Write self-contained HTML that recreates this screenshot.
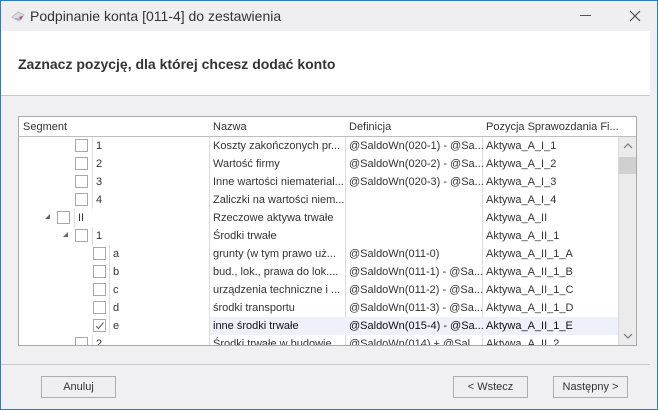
<!DOCTYPE html>
<html><head><meta charset="utf-8"><style>
*{margin:0;padding:0;box-sizing:border-box}
body{width:658px;height:410px;overflow:hidden;background:#f0eff2;font-family:"Liberation Sans",sans-serif;font-size:11px;color:#222;position:relative}
.win{position:absolute;left:0;top:0;width:658px;height:410px;border:1px solid #2a7bc4;border-top:1px solid #2a7bc4}
.title{position:absolute;left:1px;top:1px;width:656px;height:30px;background:#efeef1}
.title span{position:absolute;left:29px;top:7px;font-size:14px;color:#333}
.hdr{position:absolute;left:1px;top:31px;width:649px;height:65px;background:#fff;border-bottom:1px solid #c8c8c8}
.hdr b{position:absolute;left:17px;top:25px;font-size:14px;color:#333}
.grid{position:absolute;left:18px;top:116px;width:619px;height:230px;background:#fff;border:1px solid #a9a9a9;overflow:hidden}
.gh{position:absolute;top:0;height:20px;border-bottom:1px solid #bdbdbd;border-right:1px solid #bdbdbd;padding:4px 0 0 4px;color:#333;background:#fff;white-space:nowrap}
.vl{position:absolute;top:20px;bottom:0;width:1px;background:#dcdcdc}
.r{position:absolute;height:18px;line-height:18px;white-space:nowrap;color:#333}
.cb{position:absolute;width:13px;height:13px;border:1px solid #a8a8a8;background:#fff}
.tl{position:absolute;width:1px;height:18px;background:#ddd}
.ar{position:absolute;width:0;height:0;border-left:5px solid transparent;border-bottom:5px solid #666}
.sb{position:absolute;left:599px;top:20px;width:18px;height:208px;background:#ebebeb;border-left:1px solid #d8d8d8}
.btn{position:absolute;top:376px;height:22px;border:1px solid #adadad;background:#efeef1;text-align:center;line-height:20px;color:#333;font-size:11px}
</style></head><body>
<div class="win"></div>
<div class="title">
<svg style="position:absolute;left:9px;top:8px" width="16" height="14"><path d="M2 8 L8 3 L14 6 L9 12 Z" fill="#ddd" stroke="#bbb"/><path d="M9 8 L13 7 L11 11 Z" fill="#b04a9a"/><path d="M5 10 L10 10" stroke="#7a8fd0"/></svg>
<span>Podpinanie konta [011-4] do zestawienia</span>
<svg style="position:absolute;left:579px;top:14px" width="12" height="2"><rect width="11" height="1" fill="#555"/></svg>
<svg style="position:absolute;left:628px;top:9px" width="12" height="12"><path d="M1 1 L11 11 M11 1 L1 11" stroke="#444" stroke-width="1.1"/></svg>
</div>
<div class="hdr"><b>Zaznacz pozycję, dla której chcesz dodać konto</b></div>
<div class="grid">
<div class="gh" style="left:0;width:191px">Segment</div>
<div class="gh" style="left:190px;width:137px">Nazwa</div>
<div class="gh" style="left:326px;width:138px">Definicja</div>
<div class="gh" style="left:463px;width:137px">Pozycja Sprawozdania Fi...</div>
<div class="gh" style="left:599px;width:20px;border-right:none"></div>
<div class="vl" style="left:190px"></div><div class="vl" style="left:326px"></div><div class="vl" style="left:463px"></div>
<div style="position:absolute;left:191px;top:200px;width:408px;height:18px;background:#eef0fb"></div>

<!-- rows: top = 20 + 18*i -->
<div class="cb" style="left:56px;top:22px"></div><div class="tl" style="left:73px;top:20px"></div><div class="r" style="left:77px;top:20px">1</div>
<div class="cb" style="left:56px;top:40px"></div><div class="tl" style="left:73px;top:38px"></div><div class="r" style="left:77px;top:38px">2</div>
<div class="cb" style="left:56px;top:58px"></div><div class="tl" style="left:73px;top:56px"></div><div class="r" style="left:77px;top:56px">3</div>
<div class="cb" style="left:56px;top:76px"></div><div class="tl" style="left:73px;top:74px"></div><div class="r" style="left:77px;top:74px">4</div>
<div class="ar" style="left:26px;top:97px"></div><div class="cb" style="left:38px;top:94px"></div><div class="tl" style="left:55px;top:92px"></div><div class="r" style="left:59px;top:92px">II</div>
<div class="ar" style="left:44px;top:115px"></div><div class="cb" style="left:56px;top:112px"></div><div class="tl" style="left:73px;top:110px"></div><div class="r" style="left:77px;top:110px">1</div>
<div class="cb" style="left:74px;top:130px"></div><div class="tl" style="left:90px;top:128px"></div><div class="r" style="left:94px;top:128px">a</div>
<div class="cb" style="left:74px;top:148px"></div><div class="tl" style="left:90px;top:146px"></div><div class="r" style="left:94px;top:146px">b</div>
<div class="cb" style="left:74px;top:166px"></div><div class="tl" style="left:90px;top:164px"></div><div class="r" style="left:94px;top:164px">c</div>
<div class="cb" style="left:74px;top:184px"></div><div class="tl" style="left:90px;top:182px"></div><div class="r" style="left:94px;top:182px">d</div>
<div class="cb" style="left:74px;top:202px"><svg width="11" height="11" style="position:absolute;left:0;top:0"><path d="M2 6 L4.5 8.5 L9.5 2.5" stroke="#666" fill="none" stroke-width="1.1"/></svg></div><div class="tl" style="left:90px;top:200px"></div><div class="r" style="left:94px;top:200px">e</div>
<div class="cb" style="left:56px;top:220px"></div><div class="tl" style="left:73px;top:218px"></div><div class="r" style="left:77px;top:218px">2</div>

<div class="r" style="left:194px;top:20px">Koszty zakończonych pr...</div>
<div class="r" style="left:194px;top:38px">Wartość firmy</div>
<div class="r" style="left:194px;top:56px">Inne wartości niematerial...</div>
<div class="r" style="left:194px;top:74px">Zaliczki na wartości niem...</div>
<div class="r" style="left:194px;top:92px">Rzeczowe aktywa trwałe</div>
<div class="r" style="left:194px;top:110px">Środki trwałe</div>
<div class="r" style="left:194px;top:128px">grunty (w tym prawo uż...</div>
<div class="r" style="left:194px;top:146px">bud., lok., prawa do lok....</div>
<div class="r" style="left:194px;top:164px">urządzenia techniczne i ...</div>
<div class="r" style="left:194px;top:182px">środki transportu</div>
<div class="r" style="left:194px;top:200px;color:#111">inne środki trwałe</div>
<div class="r" style="left:194px;top:218px">Środki trwałe w budowie</div>

<div class="r" style="left:330px;top:20px">@SaldoWn(020-1) - @Sa...</div>
<div class="r" style="left:330px;top:38px">@SaldoWn(020-2) - @Sa...</div>
<div class="r" style="left:330px;top:56px">@SaldoWn(020-3) - @Sa...</div>
<div class="r" style="left:330px;top:128px">@SaldoWn(011-0)</div>
<div class="r" style="left:330px;top:146px">@SaldoWn(011-1) - @Sa...</div>
<div class="r" style="left:330px;top:164px">@SaldoWn(011-2) - @Sa...</div>
<div class="r" style="left:330px;top:182px">@SaldoWn(011-3) - @Sa...</div>
<div class="r" style="left:330px;top:200px;color:#111">@SaldoWn(015-4) - @Sa...</div>
<div class="r" style="left:330px;top:218px">@SaldoWn(014) + @Sal...</div>

<div class="r" style="left:467px;top:20px">Aktywa_A_I_1</div>
<div class="r" style="left:467px;top:38px">Aktywa_A_I_2</div>
<div class="r" style="left:467px;top:56px">Aktywa_A_I_3</div>
<div class="r" style="left:467px;top:74px">Aktywa_A_I_4</div>
<div class="r" style="left:467px;top:92px">Aktywa_A_II</div>
<div class="r" style="left:467px;top:110px">Aktywa_A_II_1</div>
<div class="r" style="left:467px;top:128px">Aktywa_A_II_1_A</div>
<div class="r" style="left:467px;top:146px">Aktywa_A_II_1_B</div>
<div class="r" style="left:467px;top:164px">Aktywa_A_II_1_C</div>
<div class="r" style="left:467px;top:182px">Aktywa_A_II_1_D</div>
<div class="r" style="left:467px;top:200px;color:#111">Aktywa_A_II_1_E</div>
<div class="r" style="left:467px;top:218px">Aktywa_A_II_2</div>

<div class="sb">
<svg style="position:absolute;left:4px;top:6px" width="10" height="6"><path d="M1 5 L5 1 L9 5" stroke="#777" fill="none" stroke-width="1.2"/></svg>
<div style="position:absolute;left:0;top:20px;width:17px;height:17px;background:#d0d0d0"></div>
<svg style="position:absolute;left:4px;top:196px" width="10" height="6"><path d="M1 1 L5 5 L9 1" stroke="#777" fill="none" stroke-width="1.2"/></svg>
</div>
</div>
<div style="position:absolute;left:1px;top:364px;width:649px;height:1px;background:#c8c8c8"></div>
<div class="btn" style="left:41px;width:75px">Anuluj</div>
<div class="btn" style="left:453px;width:75px">&lt; Wstecz</div>
<div class="btn" style="left:553px;width:75px">Następny &gt;</div>
</body></html>
